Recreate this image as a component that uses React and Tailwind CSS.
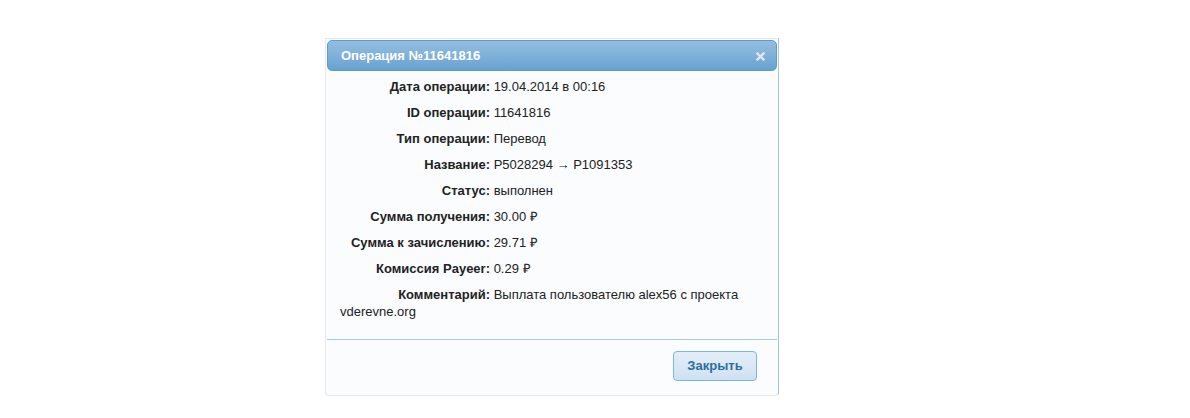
import React from "react";

const rows = [
  ["Дата операции:", "19.04.2014 в 00:16"],
  ["ID операции:", "11641816"],
  ["Тип операции:", "Перевод"],
  ["Название:", "P5028294 → P1091353"],
  ["Статус:", "выполнен"],
  ["Сумма получения:", "30.00 ₽"],
  ["Сумма к зачислению:", "29.71 ₽"],
  ["Комиссия Payeer:", "0.29 ₽"],
  ["Комментарий:", "Выплата пользователю alex56 с проекта vderevne.org"],
];

const App = () => {
  return (
    <div
      className="min-h-[418px] w-[1190px] bg-white pt-[38px] pl-[325px]"
      style={{ fontFamily: '"Liberation Sans", Arial, sans-serif' }}
    >
      <div className="w-[454px] h-[358px] flex flex-col rounded-b-[4px] border border-[#e3eaf0] border-r-[#a9c3da] bg-[#fafcfd] p-px">
        {/* header */}
        <div className="h-[31px] flex items-center justify-between rounded-[5px] border border-[#5f9ace] bg-gradient-to-b from-[#92bee0] via-[#7fb1d9] to-[#68a1cf] pl-[13px] pr-[11px]">
          <span className="text-[13px] font-bold text-white">Операция №11641816</span>
          <svg width="9" height="9" viewBox="0 0 9 9" className="mt-px">
            <path d="M1.5 1.5 L7.5 7.5 M7.5 1.5 L1.5 7.5" stroke="#dfe8f1" strokeWidth="2.4" strokeLinecap="square" />
          </svg>
        </div>

        {/* body */}
        <div className="flex-1 px-[13px] pt-[7px] text-[13px] leading-[17px] text-[#222]">
          {rows.map(([label, value]) => (
            <div key={label} className="mb-[9px]">
              <span className="inline-block w-[150px] text-right font-bold">{label}</span>{" "}
              <span>{value}</span>
            </div>
          ))}
        </div>

        {/* buttons */}
        <div className="h-[55px] border-t border-[#a6c9e2] flex justify-end items-start pt-[11px] pr-[20px]">
          <button className="h-[30px] w-[84px] rounded-[4px] border border-[#79b7e7] bg-gradient-to-b from-[#e4eef8] via-[#dae8f5] to-[#cde0f1] text-[13px] font-bold text-[#2e6e9e]">
            Закрыть
          </button>
        </div>
      </div>
    </div>
  );
};

export default App;
